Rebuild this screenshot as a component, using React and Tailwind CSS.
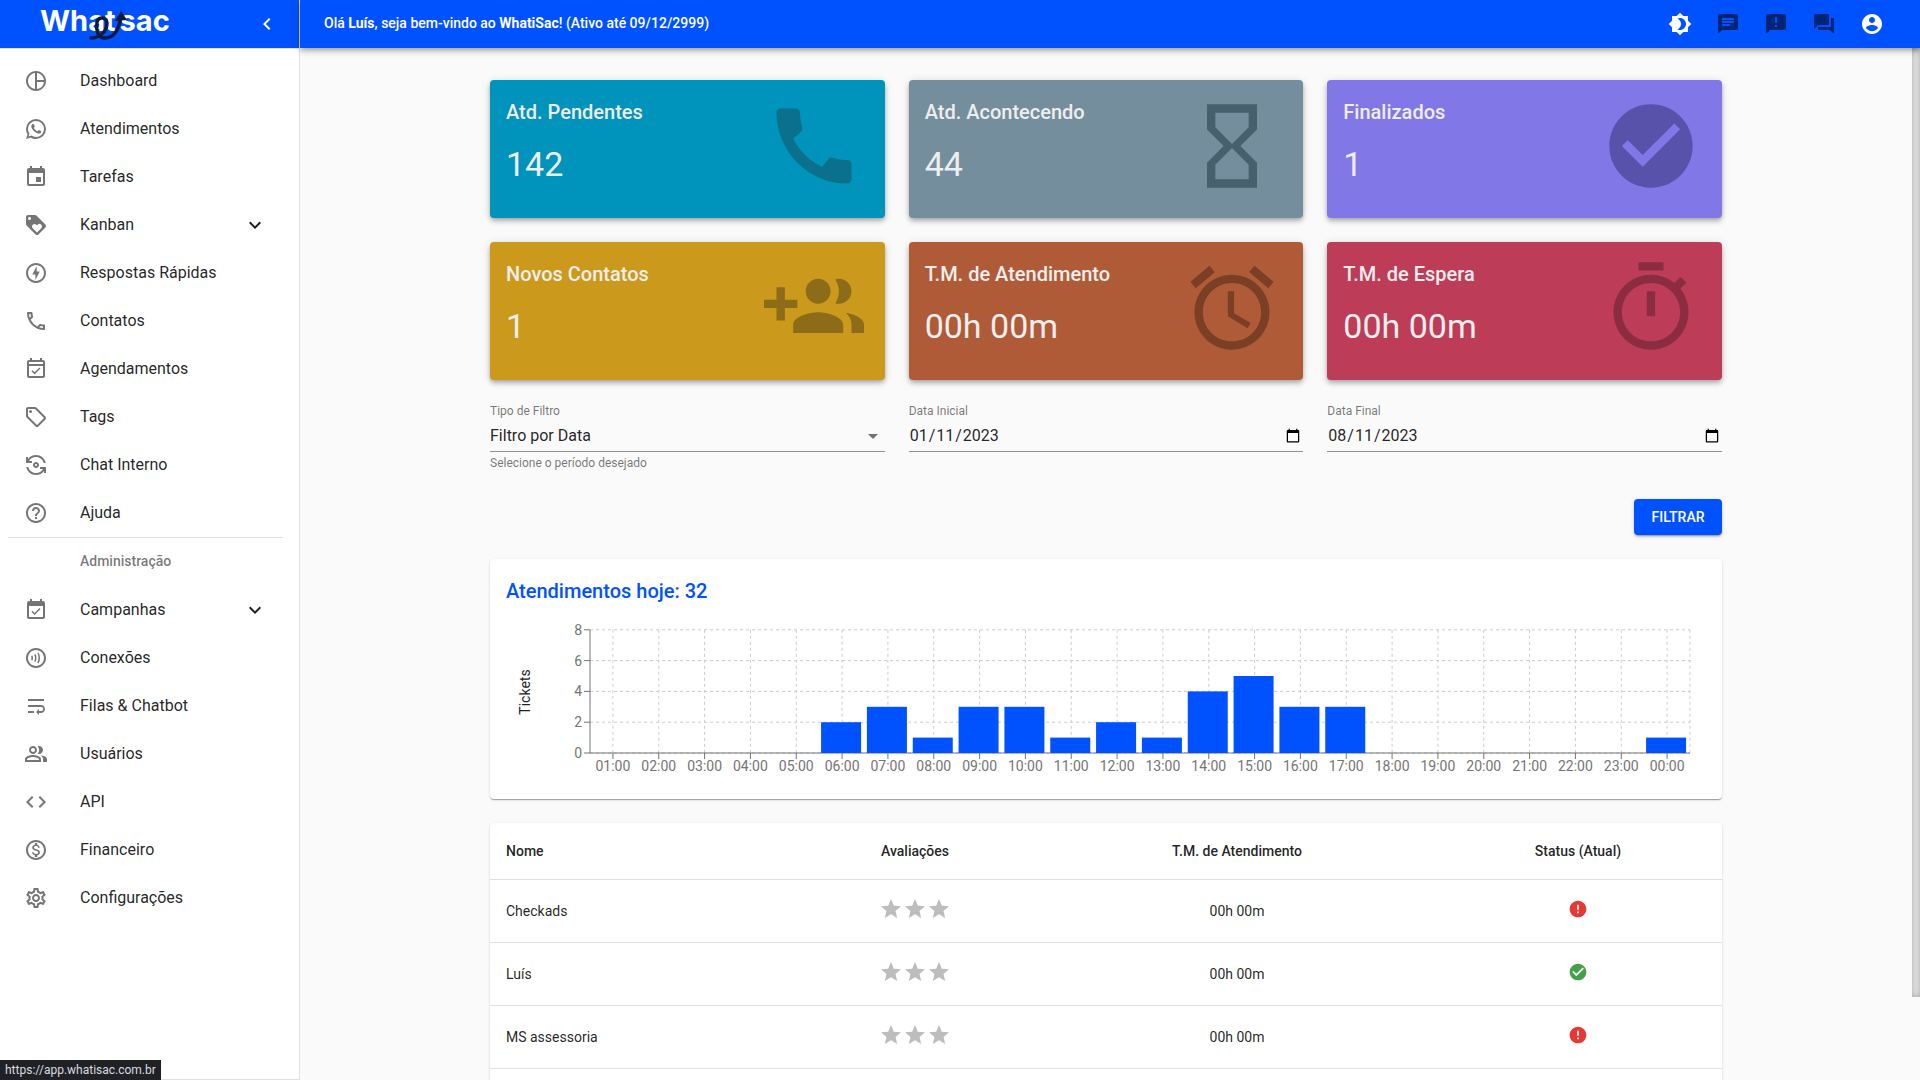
import { useState } from 'react'
import {
    MdAccessAlarm,
    MdAnnouncement,
    MdArrowDropDown,
    MdBrightness4,
    MdCall,
    MdChat,
    MdCheckCircle,
    MdChevronLeft,
    MdCode,
    MdError,
    MdEvent,
    MdExpandMore,
    MdForum,
    MdHelpOutline,
    MdHourglassEmpty,
    MdLoyalty,
    MdOutlineContactless,
    MdOutlineEventAvailable,
    MdOutlineFlipCameraAndroid,
    MdOutlineLocalOffer,
    MdOutlineMonetizationOn,
    MdOutlineOfflineBolt,
    MdOutlinePeopleAlt,
    MdOutlinePhone,
    MdOutlinePieChart,
    MdOutlineSettings,
    MdStar,
    MdWrapText,
} from 'react-icons/md'

function SvgIcon({ d, className }) {
    return (
        <svg viewBox="0 0 24 24" fill="currentColor" className={className} aria-hidden="true">
            <path d={d} />
        </svg>
    )
}

const WhatsAppIcon = ({ className }) => (
    <SvgIcon
        className={className}
        d="M16.75 13.96c.25.13.41.2.46.3.06.11.04.61-.21 1.18-.2.56-1.24 1.1-1.7 1.12-.46.02-.47.36-2.96-.73-2.49-1.09-3.99-3.75-4.11-3.92-.12-.17-.96-1.38-.92-2.61.05-1.22.69-1.8.95-2.04.24-.26.51-.29.68-.26h.47c.15 0 .36-.06.55.45l.69 1.87c.06.13.1.28.01.44l-.27.41-.39.42c-.12.12-.26.25-.12.5.12.26.62 1.09 1.32 1.78.91.88 1.71 1.17 1.95 1.3.24.14.39.12.54-.04l.81-.94c.19-.25.35-.19.58-.11l1.67.88M12 2a10 10 0 0 1 10 10 10 10 0 0 1-10 10c-1.97 0-3.8-.57-5.35-1.55L2 22l1.55-4.65A9.969 9.969 0 0 1 2 12 10 10 0 0 1 12 2m0 2a8 8 0 0 0-8 8c0 1.72.54 3.31 1.46 4.61L4.5 19.5l2.89-.96A7.95 7.95 0 0 0 12 20a8 8 0 0 0 8-8 8 8 0 0 0-8-8z"
    />
)

const EventCheckIcon = ({ className }) => (
    <SvgIcon
        className={className}
        d="M16.53 11.06L15.47 10l-4.88 4.88-2.12-2.12-1.06 1.06L10.59 17l5.94-5.94zM19 3h-1V1h-2v2H8V1H6v2H5c-1.11 0-1.99.9-1.99 2L3 19c0 1.1.89 2 2 2h14c1.1 0 2-.9 2-2V5c0-1.1-.9-2-2-2zm0 16H5V8h14v11z"
    />
)

const GroupAddIcon = ({ className }) => (
    <SvgIcon
        className={className}
        d="M8 10H5V7H3v3H0v2h3v3h2v-3h3v-2zm10 1c1.66 0 2.99-1.34 2.99-3S19.66 5 18 5c-.32 0-.63.05-.91.14.57.81.9 1.79.9 2.86s-.34 2.04-.9 2.86c.28.09.59.14.91.14zm-5 0c1.66 0 2.99-1.34 2.99-3S14.66 5 13 5c-1.66 0-3 1.34-3 3s1.34 3 3 3zm6.62 2.16c.83.73 1.38 1.66 1.38 2.84v2h3v-2c0-1.54-2.37-2.49-4.38-2.84zM13 13c-2 0-6 1-6 3v2h12v-2c0-2-4-3-6-3z"
    />
)

const TimerIcon = ({ className }) => (
    <SvgIcon
        className={className}
        d="M15 1H9v2h6V1zm-4 13h2V8h-2v6zm8.03-6.61l1.42-1.42c-.43-.51-.9-.99-1.41-1.41l-1.42 1.42C16.07 4.74 14.12 4 12 4c-4.97 0-9 4.03-9 9s4.02 9 9 9 9-4.03 9-9c0-2.12-.74-4.07-1.97-5.61zM12 20c-3.87 0-7-3.13-7-7s3.13-7 7-7 7 3.13 7 7-3.13 7-7 7z"
    />
)

const AccountIcon = ({ className }) => (
    <SvgIcon
        className={className}
        d="M12 2C6.48 2 2 6.48 2 12s4.48 10 10 10 10-4.48 10-10S17.52 2 12 2zm0 3c1.66 0 3 1.34 3 3s-1.34 3-3 3-3-1.34-3-3 1.34-3 3-3zm0 14.2c-2.5 0-4.71-1.28-6-3.22.03-1.99 4-3.08 6-3.08 1.99 0 5.97 1.09 6 3.08-1.29 1.94-3.5 3.22-6 3.22z"
    />
)

const mainMenu = [
    { label: 'Dashboard', icon: MdOutlinePieChart },
    { label: 'Atendimentos', icon: WhatsAppIcon },
    { label: 'Tarefas', icon: MdEvent },
    { label: 'Kanban', icon: MdLoyalty, expandable: true },
    { label: 'Respostas Rápidas', icon: MdOutlineOfflineBolt },
    { label: 'Contatos', icon: MdOutlinePhone },
    { label: 'Agendamentos', icon: MdOutlineEventAvailable },
    { label: 'Tags', icon: MdOutlineLocalOffer },
    { label: 'Chat Interno', icon: MdOutlineFlipCameraAndroid },
    { label: 'Ajuda', icon: MdHelpOutline },
]

const adminMenu = [
    { label: 'Campanhas', icon: EventCheckIcon, expandable: true },
    { label: 'Conexões', icon: MdOutlineContactless },
    { label: 'Filas & Chatbot', icon: MdWrapText },
    { label: 'Usuários', icon: MdOutlinePeopleAlt },
    { label: 'API', icon: MdCode },
    { label: 'Financeiro', icon: MdOutlineMonetizationOn },
    { label: 'Configurações', icon: MdOutlineSettings },
]

const cards = [
    { title: 'Atd. Pendentes', value: '142', icon: MdCall, bg: 'bg-[#0093bc]', fg: 'text-[#0b708c]' },
    { title: 'Atd. Acontecendo', value: '44', icon: MdHourglassEmpty, bg: 'bg-[#748e9d]', fg: 'text-[#47606e]' },
    { title: 'Finalizados', value: '1', icon: MdCheckCircle, bg: 'bg-[#8277e7]', fg: 'text-[#5852ab]' },
    { title: 'Novos Contatos', value: '1', icon: GroupAddIcon, bg: 'bg-[#cb991b]', fg: 'text-[#8c6b19]' },
    { title: 'T.M. de Atendimento', value: '00h 00m', icon: MdAccessAlarm, bg: 'bg-[#af5b38]', fg: 'text-[#7b3f26]' },
    { title: 'T.M. de Espera', value: '00h 00m', icon: TimerIcon, bg: 'bg-[#bd3c58]', fg: 'text-[#8c2c40]' },
]

// tickets por hora, de 01:00 até 00:00
const tickets = [0, 0, 0, 0, 0, 2, 3, 1, 3, 3, 1, 2, 1, 4, 5, 3, 3, 0, 0, 0, 0, 0, 0, 1]

const attendants = [
    { name: 'Checkads', time: '00h 00m', online: false },
    { name: 'Luís', time: '00h 00m', online: true },
    { name: 'MS assessoria', time: '00h 00m', online: false },
]

function Logo() {
    return (
        <a
            href="#"
            aria-label="Whatisac"
            className="relative mb-1.5 flex items-center text-[29px] leading-8 font-bold text-white font-[Inter,sans-serif]"
        >
            <span>What</span>
            <span className="ml-1">sac</span>
            <svg viewBox="0 0 40 32" className="absolute top-1 left-12 h-8 w-10" fill="none" aria-hidden="true">
                <path
                    d="M3 29C10 29 19 24 19 14C19 8 10 7 9 13C8 20 9 29 17 29C26 29 31 20 33 8"
                    stroke="#101a3c"
                    strokeWidth="3.5"
                    strokeLinecap="round"
                />
                <path d="M27 12L33 2L39 11Z" fill="#101a3c" />
            </svg>
        </a>
    )
}

function MenuItem({ item }) {
    const Icon = item.icon

    return (
        <li>
            <a href="#" className="flex h-12 items-center px-4 text-black/87 hover:bg-black/5">
                <span className="w-14 shrink-0 text-black/54">
                    <Icon className="size-6" />
                </span>
                <span className="flex-1 text-base">{item.label}</span>
                {item.expandable && <MdExpandMore className="size-6" />}
            </a>
        </li>
    )
}

function Sidebar() {
    return (
        <aside className="flex w-[300px] shrink-0 flex-col border-r border-black/12 bg-white">
            <div className="flex h-12 shrink-0 items-center justify-between bg-[#0051ff] pr-5 pl-10">
                <Logo />
                <button className="text-white" aria-label="Recolher menu">
                    <MdChevronLeft className="size-6" />
                </button>
            </div>
            <nav className="flex-1 border-y border-black/12 py-2 pr-4 pl-2">
                <ul>
                    {mainMenu.map((item) => (
                        <MenuItem key={item.label} item={item} />
                    ))}
                </ul>
                <h2 className="border-t border-black/12 pb-0.5 pl-[72px] text-sm leading-[46px] font-medium text-black/54">
                    Administração
                </h2>
                <ul>
                    {adminMenu.map((item) => (
                        <MenuItem key={item.label} item={item} />
                    ))}
                </ul>
            </nav>
        </aside>
    )
}

function Header() {
    return (
        <header className="z-10 flex h-12 shrink-0 items-center bg-[#0051ff] px-6 text-white shadow-[0_2px_4px_-1px_rgba(0,0,0,0.2),0_4px_5px_0_rgba(0,0,0,0.14),0_1px_10px_0_rgba(0,0,0,0.12)]">
            <p className="flex-1 pb-0.5 text-sm font-medium">
                Olá <b>Luís</b>, seja bem-vindo ao <b>WhatiSac</b>! (Ativo até 09/12/2999)
            </p>
            <button className="p-3" aria-label="Alternar tema">
                <MdBrightness4 className="size-6" />
            </button>
            <button className="p-3 text-black/54" aria-label="Mensagens">
                <MdChat className="size-6" />
            </button>
            <button className="p-3 text-black/54" aria-label="Informativos">
                <MdAnnouncement className="size-6" />
            </button>
            <button className="p-3 text-black/54" aria-label="Chat interno">
                <MdForum className="size-6" />
            </button>
            <button className="p-3" aria-label="Minha conta">
                <AccountIcon className="size-6" />
            </button>
        </header>
    )
}

function StatCard({ card }) {
    const Icon = card.icon

    return (
        <div
            className={`flex h-[138px] justify-between rounded p-4 pr-[21px] text-[#eee] shadow-[0_2px_4px_-1px_rgba(0,0,0,0.2),0_4px_5px_0_rgba(0,0,0,0.14),0_1px_10px_0_rgba(0,0,0,0.12)] ${card.bg}`}
        >
            <div>
                <h3 className="mb-4 text-xl leading-8 font-medium">{card.title}</h3>
                <p className="text-[34px] leading-10">{card.value}</p>
            </div>
            <Icon className={`size-[100px] ${card.fg}`} />
        </div>
    )
}

function DateField({ id, label, value, onChange }) {
    return (
        <div>
            <label htmlFor={id} className="block pb-0.5 text-xs leading-[14px] text-black/54">
                {label}
            </label>
            <input
                id={id}
                type="date"
                value={value}
                onChange={(e) => onChange(e.target.value)}
                className="block h-8 w-full border-b border-black/42 text-base text-black/87 outline-none"
            />
        </div>
    )
}

function Filters() {
    const [start, setStart] = useState('2023-01-11')
    const [end, setEnd] = useState('2023-08-11')

    return (
        <form className="mt-6" onSubmit={(e) => e.preventDefault()}>
            <div className="grid grid-cols-3 gap-6">
                <div>
                    <label htmlFor="filter-type" className="block pb-0.5 text-xs leading-[14px] text-black/54">
                        Tipo de Filtro
                    </label>
                    <div className="relative">
                        <select
                            id="filter-type"
                            className="block h-8 w-full appearance-none border-b border-black/42 bg-transparent text-base text-black/87 outline-none"
                        >
                            <option>Filtro por Data</option>
                        </select>
                        <MdArrowDropDown className="pointer-events-none absolute top-1 right-0 size-6 text-black/54" />
                    </div>
                    <p className="pt-[3px] pb-1 text-xs leading-4 text-black/54">Selecione o período desejado</p>
                </div>
                <DateField id="start" label="Data Inicial" value={start} onChange={setStart} />
                <DateField id="end" label="Data Final" value={end} onChange={setEnd} />
            </div>
            <div className="mt-6 flex justify-end">
                <button
                    type="submit"
                    className="h-9 w-22 rounded bg-[#0051ff] text-sm font-medium text-white uppercase shadow-[0_3px_1px_-2px_rgba(0,0,0,0.2),0_2px_2px_0_rgba(0,0,0,0.14),0_1px_5px_0_rgba(0,0,0,0.12)]"
                >
                    Filtrar
                </button>
            </div>
        </form>
    )
}

function TicketsChart() {
    const left = 84
    const right = 1184
    const bottom = 138
    const unit = 15.4
    const band = (right - left) / tickets.length
    const center = (i) => left + band * (i + 0.5)

    return (
        <svg viewBox="0 0 1200 168" className="block w-full text-sm" role="img" aria-label="Tickets por hora">
            <g stroke="#ccc" strokeDasharray="3 3">
                {[0, 2, 4, 6, 8].map((n) => (
                    <line key={n} x1={left} x2={right} y1={bottom - n * unit} y2={bottom - n * unit} />
                ))}
                {tickets.map((_, i) => (
                    <line key={i} x1={center(i)} x2={center(i)} y1={bottom - 8 * unit} y2={bottom} />
                ))}
                <line x1={right} x2={right} y1={bottom - 8 * unit} y2={bottom} />
            </g>
            <g stroke="#757575">
                <line x1={left} x2={right} y1={bottom} y2={bottom} />
                <line x1={left} x2={left} y1={bottom - 8 * unit} y2={bottom} />
                {tickets.map((_, i) => (
                    <line key={i} x1={center(i)} x2={center(i)} y1={bottom} y2={bottom + 6} />
                ))}
                {[0, 2, 4, 6, 8].map((n) => (
                    <line key={n} x1={left - 6} x2={left} y1={bottom - n * unit} y2={bottom - n * unit} />
                ))}
            </g>
            <g fill="#757575">
                {[0, 2, 4, 6, 8].map((n) => (
                    <text key={n} x={left - 8} y={bottom - n * unit + 5} textAnchor="end">
                        {n}
                    </text>
                ))}
                {tickets.map((_, i) => (
                    <text key={i} x={center(i)} y={bottom + 18} textAnchor="middle">
                        {String((i + 1) % 24).padStart(2, '0')}:00
                    </text>
                ))}
            </g>
            <g fill="#0051ff">
                {tickets.map((n, i) => (
                    <rect key={i} x={center(i) - 21} y={bottom - n * unit} width="40" height={n * unit} />
                ))}
            </g>
            <text x="24" y="77" transform="rotate(-90 24 77)" textAnchor="middle" fill="#212121">
                Tickets
            </text>
        </svg>
    )
}

function AttendantsTable() {
    return (
        <div className="mt-6 rounded bg-white pb-12 shadow-[0_2px_1px_-1px_rgba(0,0,0,0.2),0_1px_1px_0_rgba(0,0,0,0.14),0_1px_3px_0_rgba(0,0,0,0.12)]">
            <table className="w-full table-fixed text-sm leading-6 text-black/87">
                <thead>
                    <tr className="h-14 border-b border-[#e0e0e0]">
                        <th className="px-4 text-left font-medium">Nome</th>
                        <th className="w-[250px] px-4 text-center font-medium">Avaliações</th>
                        <th className="w-[394px] px-4 text-center font-medium">T.M. de Atendimento</th>
                        <th className="w-[288px] px-4 text-center font-medium">Status (Atual)</th>
                    </tr>
                </thead>
                <tbody>
                    {attendants.map((a) => (
                        <tr key={a.name} className="h-[63px] border-b border-[#e0e0e0]">
                            <td className="px-4">{a.name}</td>
                            <td className="px-4">
                                <div className="mb-1 flex justify-center text-[#bdbdbd]" role="img" aria-label="Sem avaliações">
                                    <MdStar className="size-6" />
                                    <MdStar className="size-6" />
                                    <MdStar className="size-6" />
                                </div>
                            </td>
                            <td className="px-4 text-center">{a.time}</td>
                            <td className="px-4">
                                {a.online ? (
                                    <MdCheckCircle className="mx-auto mb-1 size-5 text-[#43a047]" title="Online" />
                                ) : (
                                    <MdError className="mx-auto mb-1 size-5 text-[#e53935]" title="Offline" />
                                )}
                            </td>
                        </tr>
                    ))}
                </tbody>
            </table>
        </div>
    )
}

export default function App() {
    return (
        <div className="flex h-screen overflow-hidden bg-[#fafafa] font-[Roboto,sans-serif] text-black/87">
            <Sidebar />
            <div className="flex min-w-0 flex-1 flex-col">
                <Header />
                <div className="flex min-h-0 flex-1">
                    <main className="min-w-0 flex-1 overflow-hidden">
                        <div className="mx-auto max-w-[1280px] px-6 py-8">
                            <div className="grid grid-cols-3 gap-6">
                                {cards.map((card) => (
                                    <StatCard key={card.title} card={card} />
                                ))}
                            </div>
                            <Filters />
                            <section className="mt-6 rounded bg-white p-4 shadow-[0_2px_1px_-1px_rgba(0,0,0,0.2),0_1px_1px_0_rgba(0,0,0,0.14),0_1px_3px_0_rgba(0,0,0,0.12)]">
                                <h2 className="mb-2 text-xl leading-8 font-medium text-[#0051ff]">Atendimentos hoje: 32</h2>
                                <TicketsChart />
                            </section>
                            <AttendantsTable />
                        </div>
                    </main>
                    {/* barra de rolagem */}
                    <div className="w-2 shrink-0" aria-hidden="true">
                        <div className="h-[92%] bg-[#e8e8e8] shadow-[inset_0_0_6px_rgba(0,0,0,0.3)]" />
                    </div>
                </div>
            </div>
            {/* endereço do link sob o cursor */}
            <div className="absolute bottom-0 left-0 z-20 bg-[#202124] px-[5px] py-0.5 text-xs text-[#dadce0]">
                https://app.whatisac.com.br
            </div>
        </div>
    )
}
